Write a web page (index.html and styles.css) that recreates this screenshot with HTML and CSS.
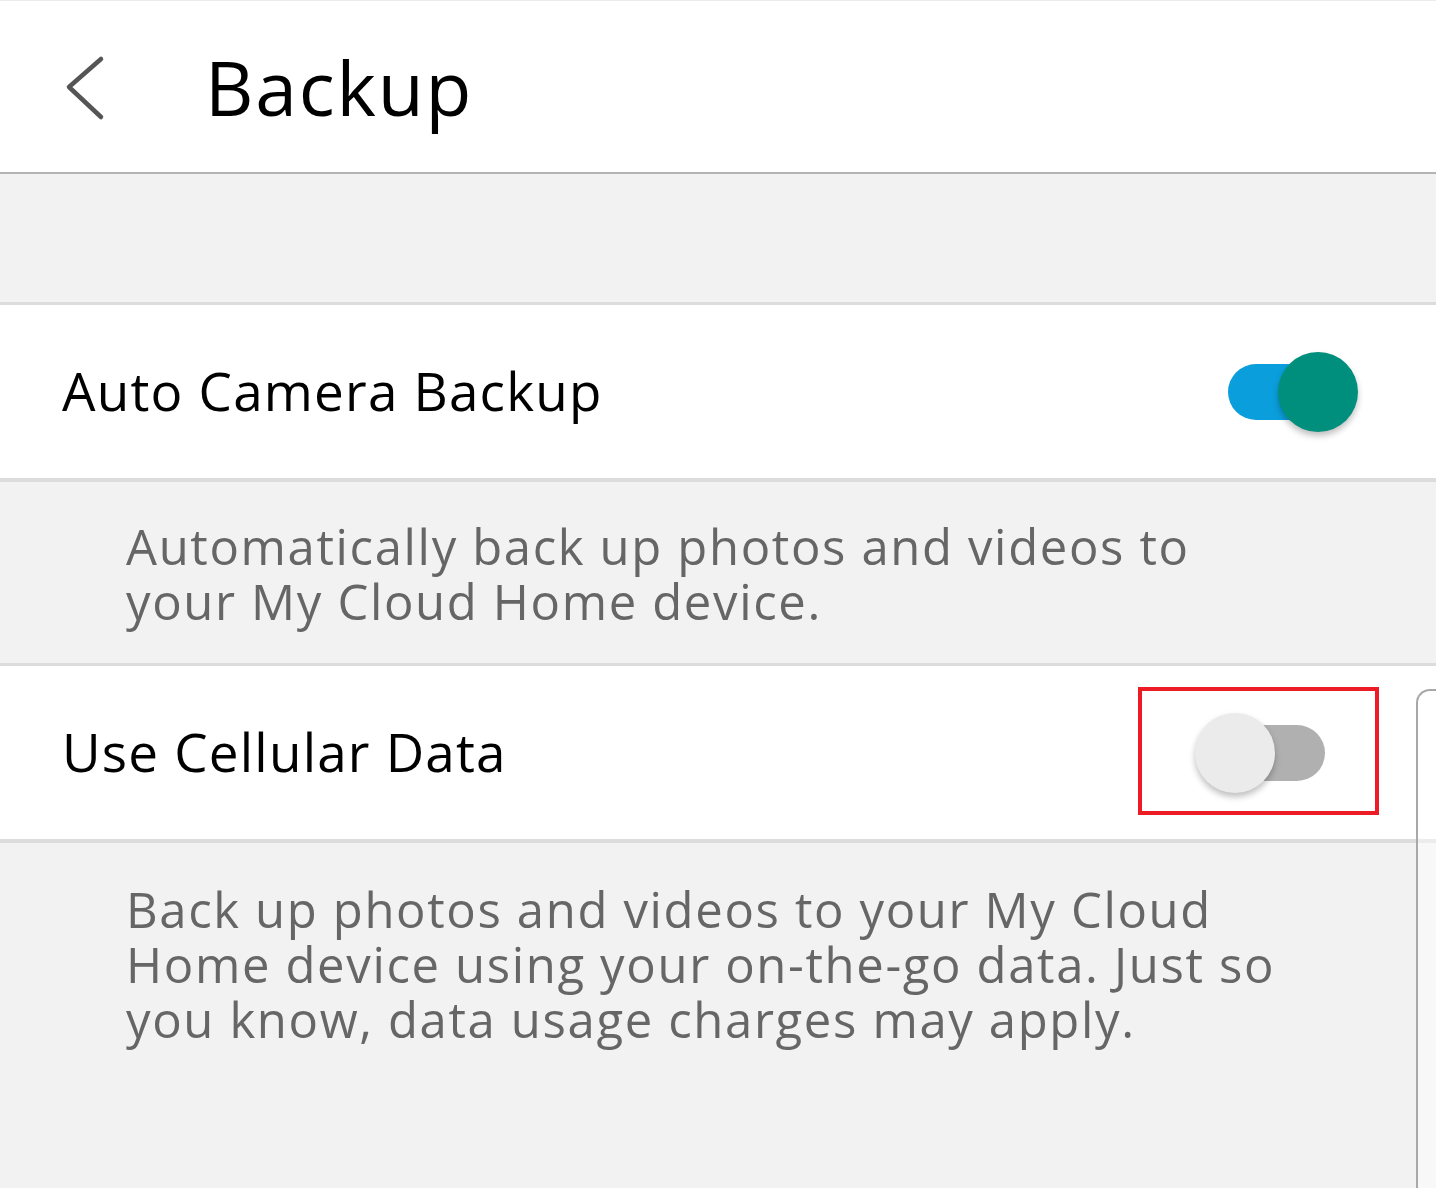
FILE: index.html
```html
<!DOCTYPE html>
<html lang="en">

<head>
    <meta charset="UTF-8">
    <meta name="viewport" content="width=device-width, initial-scale=1.0">
    <title>Backup</title>
    <link rel="stylesheet" href="styles.css">
</head>

<body>
    <!-- Thanh tiêu đề -->
    <header class="topbar">
        <svg class="back" width="44" height="68" viewBox="0 0 44 68">
            <polyline points="37,4 5,32 37,62" fill="none" stroke="#555" stroke-width="4.5" stroke-linecap="round" stroke-linejoin="round" />
        </svg>
        <h1>Backup</h1>
    </header>

    <div class="spacer"></div>

    <div class="row">
        <span class="label">Auto Camera Backup</span>
        <div class="switch on">
            <div class="track"></div>
            <div class="thumb"></div>
        </div>
    </div>
    <div class="note note-short">
        <p>Automatically back up photos and videos to your My Cloud Home device.</p>
    </div>

    <div class="row">
        <span class="label">Use Cellular Data</span>
        <div class="highlight">
            <div class="switch off">
                <div class="track"></div>
                <div class="thumb"></div>
            </div>
        </div>
    </div>
    <div class="note note-long">
        <p>Back up photos and videos to your My Cloud Home device using your on-the-go data. Just so you know, data usage charges may apply.</p>
    </div>

    <!-- Mép của cửa sổ phía sau -->
    <div class="edge"></div>
</body>

</html>
```

FILE: styles.css
```css
body {
    font-family: "Open Sans", "Noto Sans", sans-serif;
    background-color: #f2f2f2;
    color: #000;
    margin: 0;
    height: 100vh;
    overflow: hidden;
    position: relative;
}

.topbar {
    height: 174px;
    background: #fff;
    border-top: 1px solid #ececec;
    border-bottom: 2px solid #b4b4b4;
    box-sizing: border-box;
    display: flex;
    align-items: center;
    padding-left: 64px;
}

.back {
    margin-top: 4px;
}

h1 {
    margin: 0 0 0 97px;
    font-size: 75px;
    font-weight: 400;
    letter-spacing: 1.8px;
}

.spacer {
    height: 128px;
    border-bottom: 3px solid #dcdcdc;
}

.row {
    height: 173px;
    background: #fff;
    border-bottom: 4px solid #dcdcdc;
    display: flex;
    align-items: center;
    justify-content: space-between;
    padding: 0 78px 0 62px;
}

.label {
    font-size: 53px;
    letter-spacing: 1.2px;
    margin-bottom: 2px;
}

.note {
    border-bottom: 3px solid #dcdcdc;
    padding: 0 186px 0 126px;
    color: #666;
    font-size: 49px;
    letter-spacing: 1.65px;
    line-height: 55px;
}

.note p {
    margin: 0;
}

.note-short {
    height: 184px;
    padding-top: 37px;
    box-sizing: border-box;
}

.note-long {
    border-bottom: none;
    padding-top: 39px;
    padding-right: 106px;
}

.switch {
    position: relative;
    width: 160px;
    height: 80px;
}

.track {
    position: absolute;
    left: 30px;
    top: 12px;
    width: 100px;
    height: 56px;
    border-radius: 28px;
}

.thumb {
    position: absolute;
    top: 0;
    width: 80px;
    height: 80px;
    border-radius: 50%;
    box-shadow: 0px 4px 6px rgba(0, 0, 0, 0.25);
}

.on .track {
    background: #0a9fdc;
}

.on .thumb {
    left: 80px;
    background: #008f7c;
}

.off .track {
    background: #b0b0b0;
}

.off .thumb {
    left: 0;
    background: #ebebeb;
}

.highlight {
    border: 4px solid #ed1c24;
    width: 241px;
    height: 128px;
    display: flex;
    align-items: center;
    justify-content: flex-end;
    padding: 3px 22px 0 0;
    box-sizing: border-box;
    margin: 0 -21px 3px 0;
}

.highlight .switch {
    margin-right: -2px;
}

.edge {
    position: absolute;
    left: 1416px;
    top: 689px;
    width: 40px;
    bottom: 0;
    border-left: 2px solid #a8a8a8;
    border-top: 2px solid #a8a8a8;
    border-top-left-radius: 14px;
    background: rgba(255, 255, 255, 0.45);
}
```
